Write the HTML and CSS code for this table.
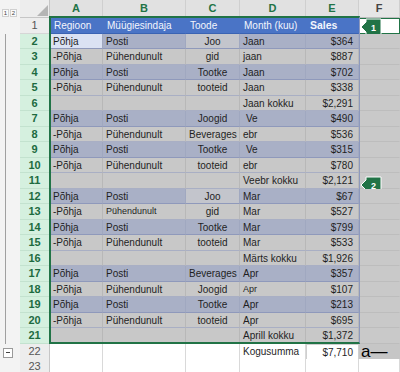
FILE: index.html
```html
<!DOCTYPE html>
<html>
<head>
<meta charset="utf-8">
<link rel="stylesheet" href="styles.css">
</head>
<body>
<div class="sheet">
  <div class="row head">
    <div class="g lv"><span class="lvb">1</span><span class="lvb">2</span></div>
    <div class="rn corner"><span class="tri"></span></div>
    <div class="ch on">A</div><div class="ch on">B</div><div class="ch on">C</div><div class="ch on">D</div><div class="ch on">E</div><div class="ch">F</div>
  </div>
  <div class="row r1">
    <div class="g"></div><div class="rn">1</div>
    <div class="c t">Regioon</div><div class="c t">Müügiesindaja</div><div class="c t">Toode</div><div class="c t md">Month (kuu)</div><div class="c t b">Sales</div>
    <div class="c f1"><svg class="badge" width="22" height="18" viewBox="0 0 22 18"><path d="M1 9 L6 4 L6 1 L21 1 L21 17 L6 17 L6 14 Z" fill="#217346" stroke="#fff" stroke-width="1"/><text x="13.5" y="12.5" text-anchor="middle" font-family="Liberation Sans" font-size="9" font-weight="bold" fill="#fff">1</text></svg></div>
  </div>
  <div class="row dk"><div class="g br top"></div><div class="rn gr">2</div><div class="c act">Põhja</div><div class="c">Posti</div><div class="c cc lt">Joo</div><div class="c">Jaan</div><div class="c n">$364</div><div class="c fx"></div></div>
  <div class="row lg"><div class="g br"></div><div class="rn gr">3</div><div class="c">-Põhja</div><div class="c">Pühendunult</div><div class="c cc">gid</div><div class="c">jaan</div><div class="c n">$887</div><div class="c fx"></div></div>
  <div class="row dk"><div class="g br"></div><div class="rn gr">4</div><div class="c">Põhja</div><div class="c">Posti</div><div class="c cc">Tootke</div><div class="c">Jaan</div><div class="c n">$702</div><div class="c fx"></div></div>
  <div class="row lg"><div class="g br"></div><div class="rn gr">5</div><div class="c">-Põhja</div><div class="c">Pühendunult</div><div class="c cc">tooteid</div><div class="c">Jaan</div><div class="c n">$338</div><div class="c fx"></div></div>
  <div class="row lg"><div class="g br"></div><div class="rn gr">6</div><div class="c"></div><div class="c"></div><div class="c"></div><div class="c">Jaan kokku</div><div class="c n">$2,291</div><div class="c fx"></div></div>
  <div class="row dk"><div class="g br"></div><div class="rn gr">7</div><div class="c">Põhja</div><div class="c">Posti</div><div class="c cc">Joogid</div><div class="c ind">Ve</div><div class="c n">$490</div><div class="c fx"></div></div>
  <div class="row lg"><div class="g br"></div><div class="rn gr">8</div><div class="c">-Põhja</div><div class="c">Pühendunult</div><div class="c cc">Beverages</div><div class="c">ebr</div><div class="c n">$536</div><div class="c fx"></div></div>
  <div class="row dk"><div class="g br"></div><div class="rn gr">9</div><div class="c">Põhja</div><div class="c">Posti</div><div class="c cc">Tootke</div><div class="c ind">Ve</div><div class="c n">$315</div><div class="c fx"></div></div>
  <div class="row lg"><div class="g br"></div><div class="rn gr">10</div><div class="c">-Põhja</div><div class="c">Pühendunult</div><div class="c cc">tooteid</div><div class="c">ebr</div><div class="c n">$780</div><div class="c fx"></div></div>
  <div class="row lg"><div class="g br"></div><div class="rn gr">11</div><div class="c"></div><div class="c"></div><div class="c"></div><div class="c">Veebr kokku</div><div class="c n">$2,121</div>
    <div class="c fx"><svg class="badge b2" width="22" height="18" viewBox="0 0 22 18"><path d="M1 9 L6 4 L6 1 L21 1 L21 17 L6 17 L6 14 Z" fill="#217346" stroke="#fff" stroke-width="1"/><text x="13.5" y="12.5" text-anchor="middle" font-family="Liberation Sans" font-size="9" font-weight="bold" fill="#fff">2</text></svg></div></div>
  <div class="row dk"><div class="g br"></div><div class="rn gr">12</div><div class="c">Põhja</div><div class="c">Posti</div><div class="c cc lt">Joo</div><div class="c">Mar</div><div class="c n">$67</div><div class="c fx"></div></div>
  <div class="row lg"><div class="g br"></div><div class="rn gr">13</div><div class="c">-Põhja</div><div class="c sm">Pühendunult</div><div class="c cc">gid</div><div class="c">Mar</div><div class="c n">$527</div><div class="c fx"></div></div>
  <div class="row dk"><div class="g br"></div><div class="rn gr">14</div><div class="c">Põhja</div><div class="c">Posti</div><div class="c cc">Tootke</div><div class="c">Mar</div><div class="c n">$799</div><div class="c fx"></div></div>
  <div class="row lg"><div class="g br"></div><div class="rn gr">15</div><div class="c">-Põhja</div><div class="c">Pühendunult</div><div class="c cc">tooteid</div><div class="c">Mar</div><div class="c n">$533</div><div class="c fx"></div></div>
  <div class="row lg"><div class="g br"></div><div class="rn gr">16</div><div class="c"></div><div class="c"></div><div class="c"></div><div class="c">Märts kokku</div><div class="c n">$1,926</div><div class="c fx"></div></div>
  <div class="row dk"><div class="g br"></div><div class="rn gr">17</div><div class="c">Põhja</div><div class="c">Posti</div><div class="c cc">Beverages</div><div class="c">Apr</div><div class="c n">$357</div><div class="c fx"></div></div>
  <div class="row lg"><div class="g br"></div><div class="rn gr">18</div><div class="c">-Põhja</div><div class="c">Pühendunult</div><div class="c cc">Joogid</div><div class="c sm">Apr</div><div class="c n">$107</div><div class="c fx"></div></div>
  <div class="row dk"><div class="g br"></div><div class="rn gr">19</div><div class="c">Põhja</div><div class="c">Posti</div><div class="c cc">Tootke</div><div class="c">Apr</div><div class="c n">$213</div><div class="c fx"></div></div>
  <div class="row lg"><div class="g br"></div><div class="rn gr">20</div><div class="c">-Põhja</div><div class="c">Pühendunult</div><div class="c cc">tooteid</div><div class="c">Apr</div><div class="c n">$695</div><div class="c fx"></div></div>
  <div class="row lg"><div class="g br"></div><div class="rn gr">21</div><div class="c"></div><div class="c"></div><div class="c"></div><div class="c">Aprill kokku</div><div class="c n">$1,372</div><div class="c fx"></div></div>
  <div class="row wh"><div class="g"><span class="minus"></span></div><div class="rn">22</div><div class="c"></div><div class="c"></div><div class="c"></div><div class="c">Kogusumma</div><div class="c n tot">$7,710</div><div class="c fa">a—</div></div>
  <div class="row wh"><div class="g"></div><div class="rn">23</div><div class="c"></div><div class="c"></div><div class="c"></div><div class="c"></div><div class="c"></div><div class="c"></div></div>
  <div class="selbox"></div>
</div>
</body>
</html>
```
FILE: styles.css
```css
html, body { margin: 0; padding: 0; background: #fff; overflow: hidden; }
.sheet { position: relative; width: 400px; height: 372px; display: flex; flex-direction: column; font-family: "Liberation Sans", Arial, sans-serif; font-size: 10px; color: #1f1f1f; }
.row { display: grid; grid-template-columns: 20px 30px 53px 83px 54px 66px 53px 41px; height: 15.5px; flex: none; }
.row > div { box-sizing: border-box; overflow: hidden; white-space: nowrap; }
.g { background: #f3f3f3; }
.rn { background: #ededed; border-right: 1px solid #c6c6c6; border-bottom: 1px solid #d6d6d6; text-align: center; font-size: 11px; line-height: 15px; color: #555; }
.rn.gr { background: #d5f0df; color: #1d6b3f; font-weight: bold; border-bottom-color: #c3e2cf; }
.head { height: 18px; }
.head .g { background: #f3f3f3; }
.lv { display: flex; gap: 1px; padding: 9px 0 0 2px; }
.lvb { width: 7px; height: 8px; background: #fafafa; border: 1px solid #d0d0d0; box-sizing: border-box; font-size: 6px; line-height: 7px; text-align: center; color: #444; }
.corner { background: #ededed; position: relative; border-bottom: 1px solid #c6c6c6; }
.tri { display: block; width: 0; height: 0; margin: 5px 0 0 17px; border-left: 11px solid transparent; border-bottom: 11px solid #b5b5b5; }
.ch { background: #e6e6e6; border-right: 1px solid #cfcfcf; border-bottom: 1px solid #bdbdbd; text-align: center; font-weight: bold; font-size: 11px; line-height: 17px; color: #444; }
.ch.on { color: #217346; background: #e1e1e1; border-bottom: 2px solid #217346; }
.c { padding: 0 3px; line-height: 15px; border-right: 1px solid #b9b9b9; border-bottom: 1px solid #b9b9b9; }
.r1 .c.t { background: #4a74c6; color: #f3f6fd; border-right-color: #4a74c6; border-bottom: 1px solid #3a63b3; padding-left: 4px; }
.r1 .md { padding-left: 5px; }
.r1 .b { font-weight: bold; color: #fff; font-size: 10.5px; }
.f1 { background: #fff; border: 1px solid #217346; position: relative; overflow: visible !important; }
.badge { position: absolute; left: 0; top: -1px; display: block; }
.b2 { top: 3px; left: 1px; }
.fx { background: #c9c9c9; border-right-color: #c9c9c9; border-bottom-color: #bababa; position: relative; overflow: visible !important; }
.dk .c { background: #a9b0c6; border-bottom: 1px solid #8f99bb; border-right-color: #a0a8c0; }
.lg .c { background: #c8c8c8; border-bottom: 1px solid #a9afc4; border-right-color: #b8b8b8; }
.dk .c.fx, .lg .c.fx { background: #c9c9c9; border-right-color: #c9c9c9; border-bottom-color: #bdbdbd; }
.dk .c.act { background: #dbe2f3; }
.dk .c.lt { background: #c3c5cc; }
.cc { text-align: center; }
.n { text-align: right; padding-right: 5px; }
.ind { padding-left: 6px; }
.sm { font-size: 9px; }
.br { background: #f3f3f3 linear-gradient(#a0a0a0, #a0a0a0) 5px 0 / 1px 100% no-repeat; }
.br.top { background: #f3f3f3 linear-gradient(#a0a0a0, #a0a0a0) 5px 0 / 1px 100% no-repeat, linear-gradient(#a0a0a0, #a0a0a0) 5px 0 / 4px 1px no-repeat; }
.minus { display: block; width: 8px; height: 8px; margin: 4px 0 0 3px; border: 1px solid #9a9a9a; background: #fff linear-gradient(#444, #444) center / 4px 1px no-repeat; }
.wh .c { background: #fff; border-right-color: #d9d9d9; border-bottom-color: #dcdcdc; }
.wh .tot { border: 1px solid #cfcfcf; }
.row > .fa { background: #c6c6c6; color: #000; font-size: 17px; line-height: 15px; padding: 0 0 0 2px; border-right-color: #c6c6c6; overflow: visible; }
.selbox { position: absolute; left: 49px; top: 16px; width: 311px; height: 328px; box-sizing: border-box; border: 2px solid #217346; border-right: 1px solid #8d99bd; pointer-events: none; }
```
